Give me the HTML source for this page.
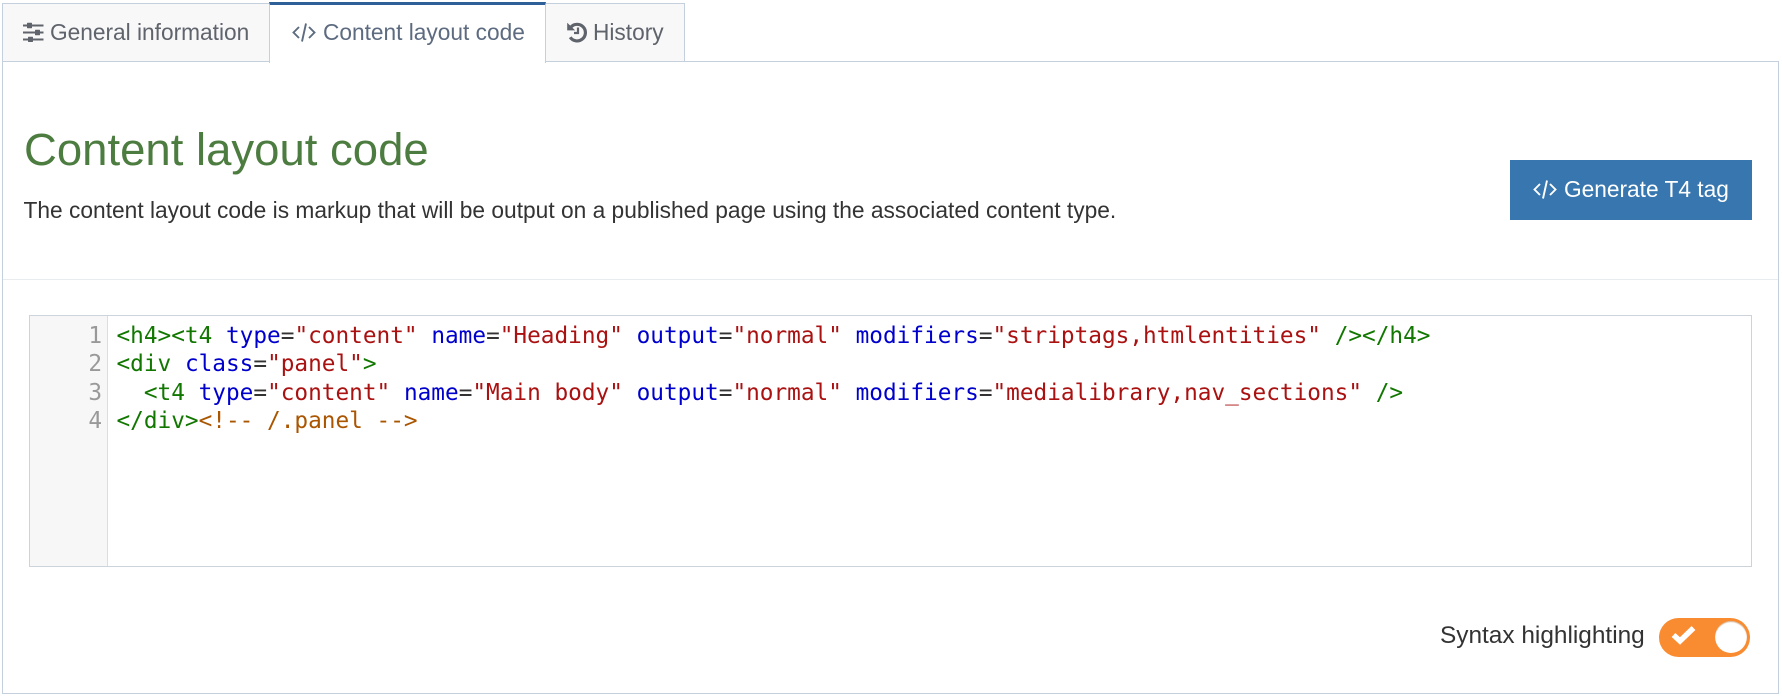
<!DOCTYPE html>
<html>
<head>
<meta charset="utf-8">
<style>
html,body{margin:0;padding:0;background:#fff;}
body{width:1782px;height:696px;position:relative;overflow:hidden;font-family:"Liberation Sans",sans-serif;}
.a{position:absolute;white-space:pre;}
.tab{position:absolute;box-sizing:border-box;background:#f8f8f9;border:1px solid #c5d0de;}
.t{font-size:22.7px;line-height:28px;color:#5f636b;}
.code{font-family:"DejaVu Sans Mono",monospace;font-size:22.74px;line-height:28.33px;}
.g{color:#117700}.b{color:#0000cc}.r{color:#aa1111}.o{color:#aa5500}.k{color:#333}
</style>
</head>
<body>
<!-- panel -->
<div class="a" style="left:2px;top:61px;width:1775px;height:631px;box-sizing:content-box;border:1px solid #c5d0de;"></div>
<!-- tabs -->
<div class="tab" style="left:2px;top:3px;width:268px;height:59px;"></div>
<div class="tab" style="left:545px;top:3px;width:140px;height:59px;"></div>
<div class="a" style="left:269px;top:2px;width:277px;height:61px;background:#fff;box-sizing:border-box;border-left:1px solid #c5d0de;border-right:1px solid #c5d0de;border-top:3px solid #2f5f97;"></div>

<svg class="a" style="left:23px;top:22px;" width="22" height="20" viewBox="0 0 22 20">
<g fill="#5f636b"><rect x="0" y="2.5" width="20.5" height="2"/><rect x="0" y="9.5" width="20.5" height="2"/><rect x="0" y="16.5" width="20.5" height="2"/>
<rect x="4" y="0.8" width="5" height="5.4" rx="0.6"/><rect x="12" y="7.8" width="5" height="5.4" rx="0.6"/><rect x="5" y="14.8" width="5" height="5.2" rx="0.6"/></g>
</svg>
<div class="a t" style="left:50px;top:18px;">General information</div>

<svg class="a" style="left:292px;top:22px;" width="24" height="21" viewBox="0 0 24 21">
<path d="M7 5 L1.5 10.5 L7 16 M17 5 L22.5 10.5 L17 16 M14 1.5 L10 19.5" fill="none" stroke="#5d6b80" stroke-width="1.9"/>
</svg>
<div class="a t" style="left:323px;top:18px;color:#5d6b80;">Content layout code</div>

<svg class="a" style="left:566px;top:21px;" width="22" height="22" viewBox="0 0 22 22">
<path d="M5 6 A 8.3 8.3 0 1 1 4.2 16.2" fill="none" stroke="#5f636b" stroke-width="3.2"/>
<path d="M1.2 1.8 L9.2 9.4 L1.2 9.4 Z" fill="#5f636b"/>
<path d="M12 6.5 V12 H8" fill="none" stroke="#5f636b" stroke-width="2.2"/>
</svg>
<div class="a t" style="left:593px;top:18px;">History</div>

<!-- heading -->
<div class="a" style="left:24px;top:122px;font-size:45.5px;line-height:56px;color:#4c7c3f;">Content layout code</div>
<div class="a" style="left:23.5px;top:196px;font-size:22.75px;line-height:28px;color:#333;">The content layout code is markup that will be output on a published page using the associated content type.</div>

<!-- button -->
<div class="a" style="left:1510px;top:160px;width:242px;height:60px;background:#3776ae;"></div>
<svg class="a" style="left:1533px;top:179px;" width="24" height="21" viewBox="0 0 24 21">
<path d="M7 5 L1.5 10.5 L7 16 M17 5 L22.5 10.5 L17 16 M14 1.5 L10 19.5" fill="none" stroke="#fff" stroke-width="1.9"/>
</svg>
<div class="a" style="left:1564px;top:175px;font-size:22.7px;line-height:28px;color:#fff;">Generate T4 tag</div>

<div class="a" style="left:3px;top:279px;width:1775px;height:1px;background:#e9ecef;"></div>

<!-- code box -->
<div class="a" style="left:29px;top:315px;width:1723px;height:252px;box-sizing:border-box;border:1px solid #ccd3da;background:#fff;"></div>
<div class="a" style="left:30px;top:316px;width:77px;height:250px;background:#f7f7f7;border-right:1px solid #ddd;"></div>
<div class="a code" style="left:80px;top:322px;width:22px;text-align:right;color:#999;">1
2
3
4</div>
<div class="a code k" style="left:116.5px;top:322px;"><span class="g">&lt;h4&gt;&lt;t4</span> <span class="b">type</span>=<span class="r">"content"</span> <span class="b">name</span>=<span class="r">"Heading"</span> <span class="b">output</span>=<span class="r">"normal"</span> <span class="b">modifiers</span>=<span class="r">"striptags,htmlentities"</span> <span class="g">/&gt;&lt;/h4&gt;</span>
<span class="g">&lt;div</span> <span class="b">class</span>=<span class="r">"panel"</span><span class="g">&gt;</span>
  <span class="g">&lt;t4</span> <span class="b">type</span>=<span class="r">"content"</span> <span class="b">name</span>=<span class="r">"Main body"</span> <span class="b">output</span>=<span class="r">"normal"</span> <span class="b">modifiers</span>=<span class="r">"medialibrary,nav_sections"</span> <span class="g">/&gt;</span>
<span class="g">&lt;/div&gt;</span><span class="o">&lt;!-- /.panel --&gt;</span></div>

<!-- toggle -->
<div class="a" style="left:1440px;top:622px;font-size:24.4px;line-height:28px;color:#333;">Syntax highlighting</div>
<div class="a" style="left:1659px;top:618px;width:91px;height:39px;border-radius:20px;background:#f98b31;"></div>
<div class="a" style="left:1715px;top:621px;width:32px;height:32px;border-radius:50%;background:#fff;box-shadow:inset 0 1px 1px rgba(160,90,20,.45);"></div>
<svg class="a" style="left:1670px;top:622px;" width="28" height="26" viewBox="0 0 28 26">
<path d="M3.5 13 L10 19 L23.5 6" fill="none" stroke="#fff" stroke-width="5.5"/>
</svg>
</body>
</html>
